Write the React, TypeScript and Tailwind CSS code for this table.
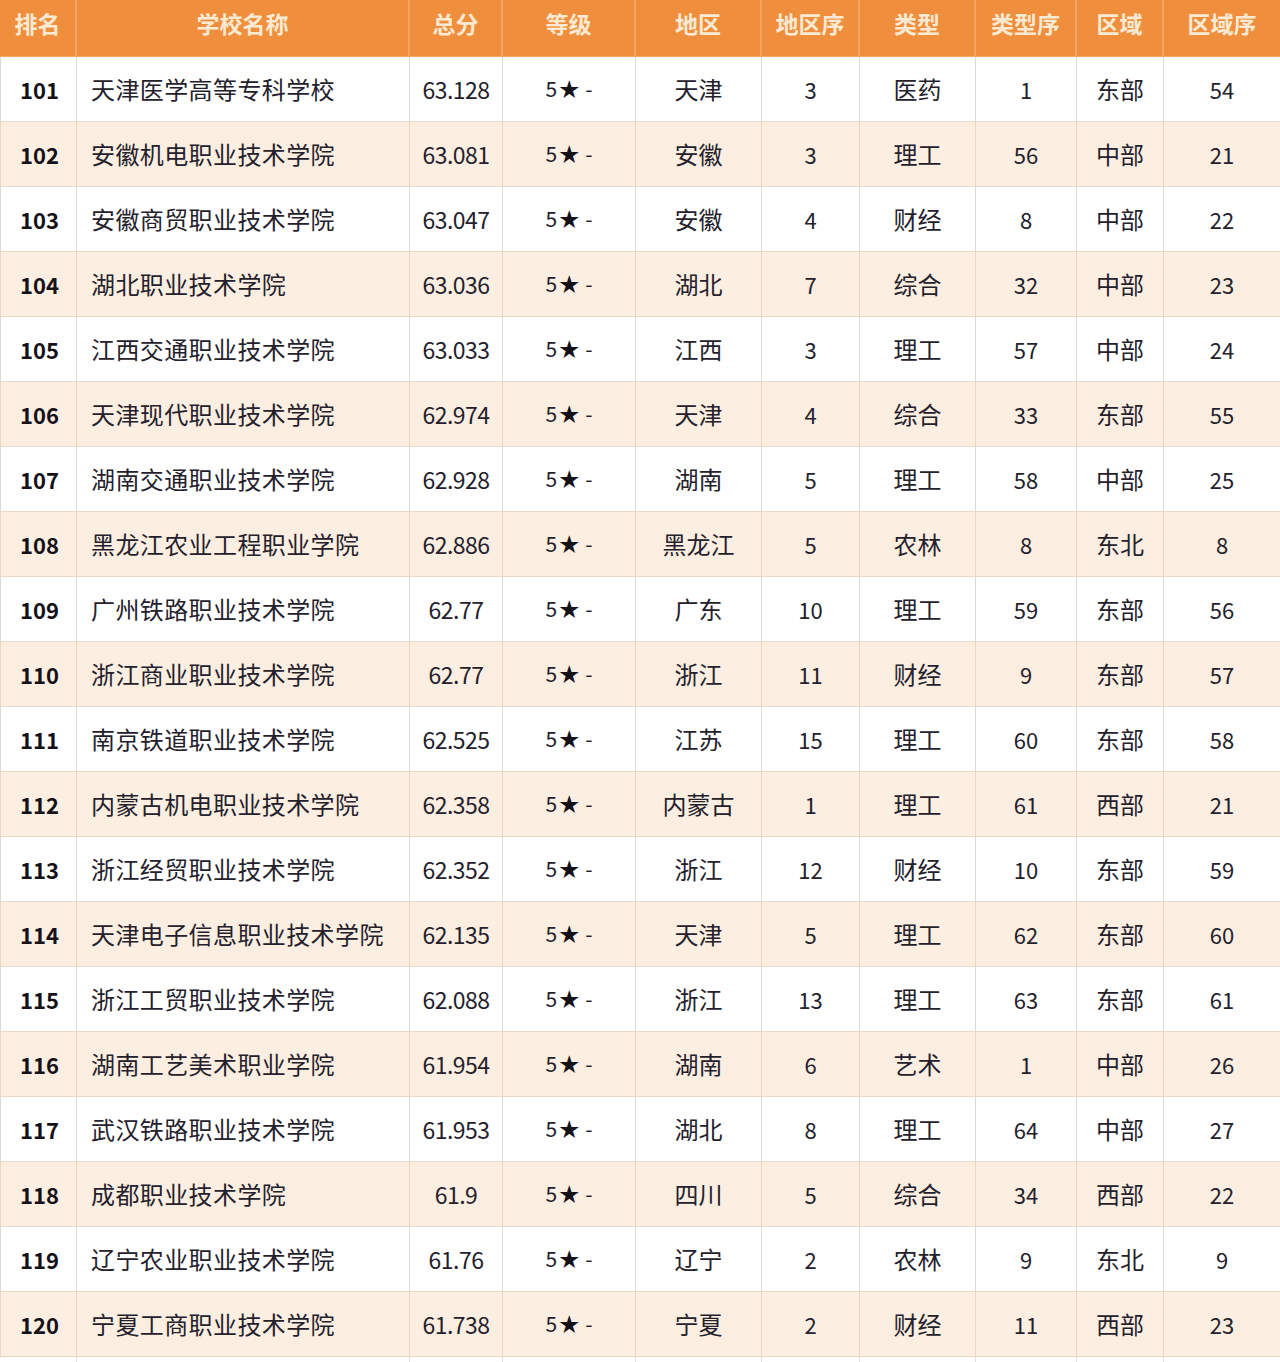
const headers = ["排名", "学校名称", "总分", "等级", "地区", "地区序", "类型", "类型序", "区域", "区域序"];

type Row = [number, string, string, string, number, string, number, string, number];

const rows: Row[] = [
  [101, "天津医学高等专科学校", "63.128", "天津", 3, "医药", 1, "东部", 54],
  [102, "安徽机电职业技术学院", "63.081", "安徽", 3, "理工", 56, "中部", 21],
  [103, "安徽商贸职业技术学院", "63.047", "安徽", 4, "财经", 8, "中部", 22],
  [104, "湖北职业技术学院", "63.036", "湖北", 7, "综合", 32, "中部", 23],
  [105, "江西交通职业技术学院", "63.033", "江西", 3, "理工", 57, "中部", 24],
  [106, "天津现代职业技术学院", "62.974", "天津", 4, "综合", 33, "东部", 55],
  [107, "湖南交通职业技术学院", "62.928", "湖南", 5, "理工", 58, "中部", 25],
  [108, "黑龙江农业工程职业学院", "62.886", "黑龙江", 5, "农林", 8, "东北", 8],
  [109, "广州铁路职业技术学院", "62.77", "广东", 10, "理工", 59, "东部", 56],
  [110, "浙江商业职业技术学院", "62.77", "浙江", 11, "财经", 9, "东部", 57],
  [111, "南京铁道职业技术学院", "62.525", "江苏", 15, "理工", 60, "东部", 58],
  [112, "内蒙古机电职业技术学院", "62.358", "内蒙古", 1, "理工", 61, "西部", 21],
  [113, "浙江经贸职业技术学院", "62.352", "浙江", 12, "财经", 10, "东部", 59],
  [114, "天津电子信息职业技术学院", "62.135", "天津", 5, "理工", 62, "东部", 60],
  [115, "浙江工贸职业技术学院", "62.088", "浙江", 13, "理工", 63, "东部", 61],
  [116, "湖南工艺美术职业学院", "61.954", "湖南", 6, "艺术", 1, "中部", 26],
  [117, "武汉铁路职业技术学院", "61.953", "湖北", 8, "理工", 64, "中部", 27],
  [118, "成都职业技术学院", "61.9", "四川", 5, "综合", 34, "西部", 22],
  [119, "辽宁农业职业技术学院", "61.76", "辽宁", 2, "农林", 9, "东北", 9],
  [120, "宁夏工商职业技术学院", "61.738", "宁夏", 2, "财经", 11, "西部", 23],
];

const cols = "grid grid-cols-[77px_333px_93px_133px_126px_98px_116px_101px_87px_116px]";

export default function App() {
  return (
    <div
      className="w-[1280px] h-[1362px] bg-white overflow-hidden"
      style={{ fontFamily: '"Noto Sans CJK SC", "Noto Sans", sans-serif' }}
    >
      {/* header */}
      <div className={`${cols} h-[57px] bg-[#EF8F3E] border-b border-[#F2A767]`}>
        {headers.map((h, i) => (
          <div
            key={h}
            className={`flex items-center justify-center pb-[10px] text-[23px] font-bold text-[#FBE9D2] ${
              i < headers.length - 1 ? "border-r-2 border-[#F4A566]" : ""
            }`}
          >
            {h}
          </div>
        ))}
      </div>

      {rows.map((r, idx) => {
        const odd = idx % 2 === 1;
        const line = odd ? "border-[#EAD6C2]" : "border-[#DDD8D1]";
        const cell = `flex items-center justify-center border-r ${line}`;
        return (
          <div
            key={r[0]}
            className={`${cols} h-[65px] border-b border-[#E8D8C8] text-[#24212c] ${
              odd ? "bg-[#FCEEE1]" : "bg-white"
            }`}
          >
            <div className={`${cell} border-l pl-[2px] text-[22px] font-bold text-[#141218]`}>{r[0]}</div>
            <div className={`flex items-center pl-[14px] border-r ${line} text-[24px] tracking-[0.4px]`}>
              {r[1]}
            </div>
            <div className={`${cell} text-[23px] tracking-[-0.5px]`}>{r[2]}</div>
            <div className={`${cell} text-[21px]`}>
              <span>5</span>
              <span className="ml-[2px] text-[20px] text-[#141218]">★</span>
              <span className="ml-[6px]">-</span>
            </div>
            <div className={`${cell} text-[24px]`}>{r[3]}</div>
            <div className={`${cell} text-[22px]`}>{r[4]}</div>
            <div className={`${cell} text-[24px]`}>{r[5]}</div>
            <div className={`${cell} text-[22px]`}>{r[6]}</div>
            <div className={`${cell} text-[24px]`}>{r[7]}</div>
            <div className="flex items-center justify-center text-[22px]">{r[8]}</div>
          </div>
        );
      })}

      <div className={`${cols} h-[10px]`}>
        {headers.map((h, i) => (
          <div key={h} className={i < headers.length - 1 ? "border-r border-[#E3DDD6]" : ""} />
        ))}
      </div>
    </div>
  );
}
